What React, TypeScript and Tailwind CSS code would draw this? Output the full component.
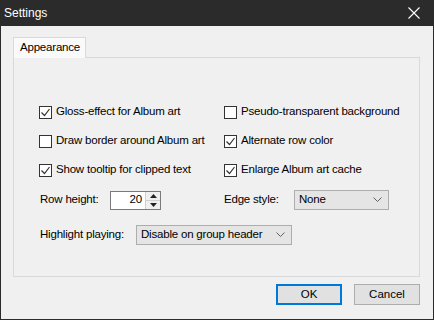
import React from 'react';

const font = { fontFamily: '"Liberation Sans", Arial, sans-serif' };

function Check({ checked, label }: { checked: boolean; label: string }) {
  return (
    <div className="flex items-center h-[16px]">
      <span className="w-[13px] h-[13px] border border-[#333333] bg-white flex items-center justify-center shrink-0">
        {checked && (
          <svg width="11" height="11" viewBox="0 0 11 11">
            <polyline points="1.5,5.5 4.5,8.5 9.5,2" fill="none" stroke="#333333" strokeWidth="1.2" />
          </svg>
        )}
      </span>
      <span className="ml-[4px] text-[11.5px] tracking-[-0.2px] text-black whitespace-nowrap">{label}</span>
    </div>
  );
}

function Combo({ value, width }: { value: string; width: string }) {
  return (
    <div className={`${width} h-[20px] bg-[#e5e5e5] border border-[#adadad] flex items-center pl-[4px] pr-[6px] justify-between`}>
      <span className="text-[11.5px] tracking-[-0.2px] text-black whitespace-nowrap">{value}</span>
      <svg width="9" height="6" viewBox="0 0 9 6">
        <polyline points="0.5,0.5 4.5,4.5 8.5,0.5" fill="none" stroke="#606060" strokeWidth="1" />
      </svg>
    </div>
  );
}

export default function App() {
  return (
    <div className="w-[434px] h-[320px] bg-[#f0f0f0] border-x border-b border-[#2b2b2b] flex flex-col select-none" style={font}>
      {/* Title bar */}
      <div className="h-[26px] bg-[#2b2b2b] flex items-center justify-between pl-[3px] pr-[13px] shrink-0">
        <span className="text-[12px] text-white">Settings</span>
        <svg width="12" height="12" viewBox="0 0 12 12">
          <path d="M0.5 0.5 L11.5 11.5 M11.5 0.5 L0.5 11.5" stroke="#ffffff" strokeWidth="1.1" />
        </svg>
      </div>

      <div className="flex-1 flex flex-col pl-[12px] pr-[13px] pt-[11px]">
        {/* Tab strip */}
        <div className="flex h-[20px]">
          <div className="w-[73px] h-[21px] bg-[#fafafa] border border-b-0 border-[#d9d9d9] flex items-center pl-[6px] text-[11.5px] tracking-[-0.2px] text-black relative z-10">
            Appearance
          </div>
        </div>

        {/* Tab panel */}
        <div className="h-[220px] border border-[#d9d9d9] bg-[#f0f0f0] flex flex-col pl-[25px] pt-[46px]">
          <div className="grid grid-cols-[185px_1fr] gap-y-[13px]">
            <Check checked label="Gloss-effect for Album art" />
            <Check checked={false} label="Pseudo-transparent background" />
            <Check checked={false} label="Draw border around Album art" />
            <Check checked label="Alternate row color" />
            <Check checked label="Show tooltip for clipped text" />
            <Check checked label="Enlarge Album art cache" />
          </div>

          <div className="flex items-center h-[20px] mt-[12px] text-[11.5px] tracking-[-0.2px] text-black">
            <span className="w-[70px] ml-[1px]">Row height:</span>
            <div className="flex h-[19px] border border-[#7a7a7a] bg-white">
              <div className="w-[34px] flex items-center justify-end pr-[3px]">20</div>
              <div className="w-[15px] flex flex-col border-l border-[#d0d0d0] bg-[#f0f0f0]">
                <div className="flex-1 flex items-center justify-center border-b border-[#d0d0d0]">
                  <svg width="7" height="4" viewBox="0 0 7 4"><polygon points="3.5,0 7,4 0,4" fill="#222" /></svg>
                </div>
                <div className="flex-1 flex items-center justify-center">
                  <svg width="7" height="4" viewBox="0 0 7 4"><polygon points="0,0 7,0 3.5,4" fill="#222" /></svg>
                </div>
              </div>
            </div>
            <span className="ml-[63px] w-[70px]">Edge style:</span>
            <Combo value="None" width="w-[95px]" />
          </div>

          <div className="flex items-center h-[20px] mt-[15px] text-[11.5px] tracking-[-0.2px] text-black">
            <span className="w-[96px] ml-[1px]">Highlight playing:</span>
            <Combo value="Disable on group header" width="w-[156px]" />
          </div>
        </div>

        {/* Buttons */}
        <div className="flex justify-end gap-[12px] mt-[7px]">
          <button className="w-[66px] h-[21px] bg-[#e1e1e1] border-2 border-[#0078d7] text-[11.5px] text-black flex items-center justify-center">
            OK
          </button>
          <button className="w-[66px] h-[21px] bg-[#e1e1e1] border border-[#adadad] text-[11.5px] text-black flex items-center justify-center">
            Cancel
          </button>
        </div>
      </div>
    </div>
  );
}
